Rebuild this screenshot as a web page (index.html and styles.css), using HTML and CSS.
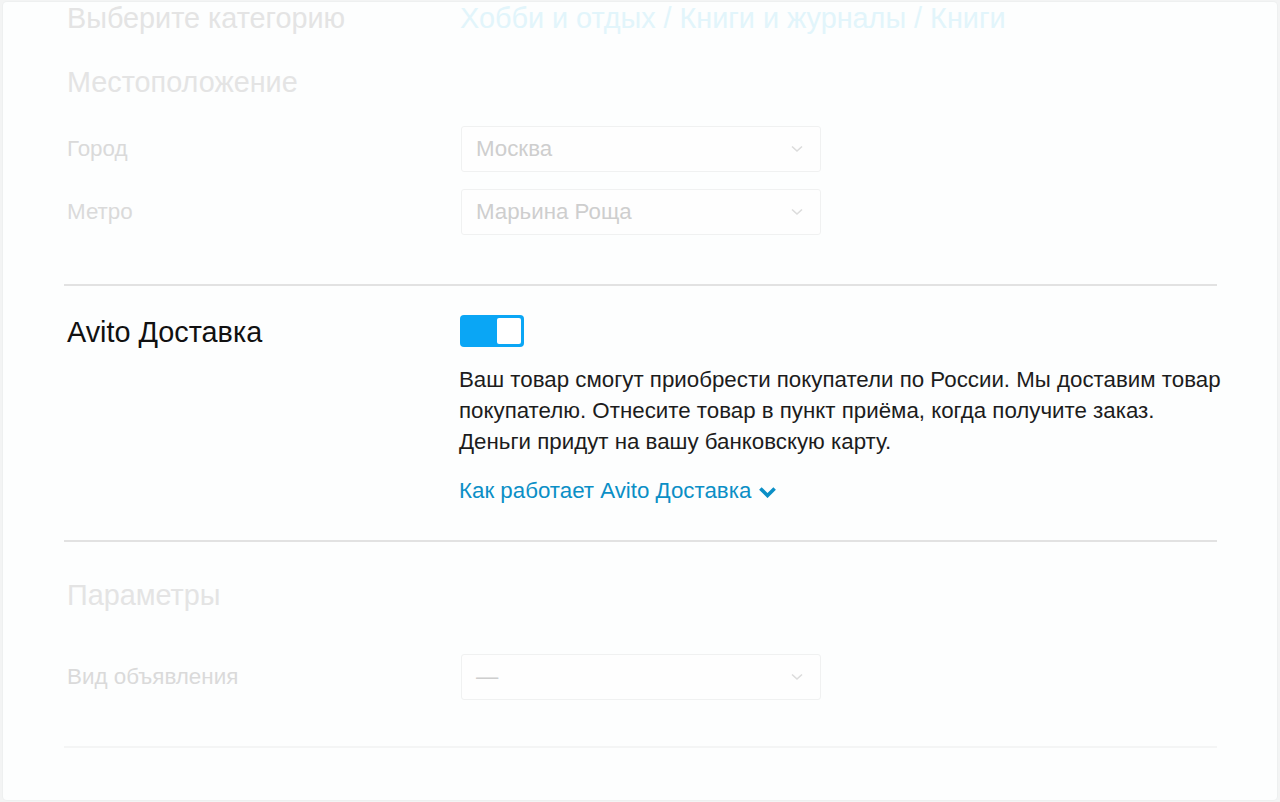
FILE: index.html
```html
<!DOCTYPE html>
<html lang="ru">
<head>
    <meta charset="UTF-8">
    <title>Подача объявления</title>
    <link rel="stylesheet" href="styles.css">
</head>
<body>
    <div class="card">
        <div class="row faded">
            <div class="label-col heading">Выберите категорию</div>
            <div class="field-col crumbs">Хобби и отдых / Книги и журналы / Книги</div>
        </div>

        <div class="section faded">
            <h3 class="heading loc-title">Местоположение</h3>
            <div class="row field-row">
                <div class="label-col small-label">Город</div>
                <div class="field-col">
                    <div class="select"><span>Москва</span><svg class="chev" viewBox="0 0 12 8"><path d="M1 1.5l5 4.5 5-4.5" fill="none" stroke="currentColor" stroke-width="1.6"/></svg></div>
                </div>
            </div>
            <div class="row field-row">
                <div class="label-col small-label">Метро</div>
                <div class="field-col">
                    <div class="select"><span>Марьина Роща</span><svg class="chev" viewBox="0 0 12 8"><path d="M1 1.5l5 4.5 5-4.5" fill="none" stroke="currentColor" stroke-width="1.6"/></svg></div>
                </div>
            </div>
        </div>

        <hr class="divider first">

        <div class="row delivery">
            <div class="label-col heading dark">Avito Доставка</div>
            <div class="field-col">
                <div class="toggle"><span class="knob"></span></div>
                <p class="desc">Ваш товар смогут приобрести покупатели по России. Мы доставим товар покупателю. Отнесите товар в пункт приёма, когда получите заказ.<br>Деньги придут на вашу банковскую карту.</p>
                <a class="more" href="#">Как работает Avito Доставка<svg viewBox="0 0 16 10"><path d="M2 2l6 6 6-6" fill="none" stroke="currentColor" stroke-width="3"/></svg></a>
            </div>
        </div>

        <hr class="divider second">

        <div class="section faded">
            <h3 class="heading params-title">Параметры</h3>
            <div class="row field-row">
                <div class="label-col small-label">Вид объявления</div>
                <div class="field-col">
                    <div class="select"><span>—</span><svg class="chev" viewBox="0 0 12 8"><path d="M1 1.5l5 4.5 5-4.5" fill="none" stroke="currentColor" stroke-width="1.6"/></svg></div>
                </div>
            </div>
        </div>

        <hr class="divider light">
    </div>
</body>
</html>
```

FILE: styles.css
```css
body { margin: 0; background: #f3f4f4; font-family: "Liberation Sans", Arial, sans-serif; }
.card { margin: 2px 3px; height: 798px; box-sizing: border-box; background: #fdfefe; border-radius: 4px; box-shadow: 0 0 0 1px #eef0f0; padding: 0 42px 0 61px; overflow: hidden; }
.row { display: flex; }
.label-col { width: 393px; padding-left: 3px; flex: none; }
.field-col { flex: 1; }
.heading { font-size: 28.8px; font-weight: normal; margin: 0; line-height: 32px; }
.faded .heading { color: #e4e4e4; }
.crumbs { font-size: 28.8px; line-height: 32px; color: #e2f5fb; }
.loc-title { padding-left: 3px; margin-top: 32px; }
.field-row { align-items: center; }
.loc-title + .field-row { margin-top: 28px; }
.field-row + .field-row { margin-top: 17px; }
.small-label { font-size: 22.4px; color: #dadada; }
.select { width: 360px; height: 46px; box-sizing: border-box; border: 1px solid #f0f1f1; border-radius: 3px; background: #fefefe; display: flex; align-items: center; justify-content: space-between; padding: 0 17px 0 14px; font-size: 22.3px; color: #cecece; margin-left: 1px; }
.chev { width: 12px; height: 8px; color: #dcdcdc; }
.divider { border: none; border-top: 2px solid #e2e2e2; margin: 49px 18px 0 0; }
.divider.second { margin-top: 34px; }
.divider.light { border-top-color: #f4f5f5; margin-top: 46px; }
.delivery { padding-top: 29px; }
.dark { color: #111; padding-top: 1px; }
.toggle { width: 64px; height: 32px; box-sizing: border-box; background: #0aa6f5; border-radius: 4px; position: relative; }
.knob { position: absolute; right: 3px; top: 3px; width: 24px; height: 26px; background: #fff; border-radius: 2px; }
.desc { margin: 17px 0 0 -1px; font-size: 22.3px; line-height: 31px; color: #1c1c1c; }
.more { display: flex; align-items: center; margin-top: 18px; margin-left: -1px; font-size: 22.3px; line-height: 31px; color: #0b8fc6; text-decoration: none; }
.more svg { width: 19px; height: 12px; margin-left: 7px; margin-top: 2px; }
.params-title { padding-left: 3px; margin-top: 37px; }
.params-title + .field-row { margin-top: 43px; }
```
